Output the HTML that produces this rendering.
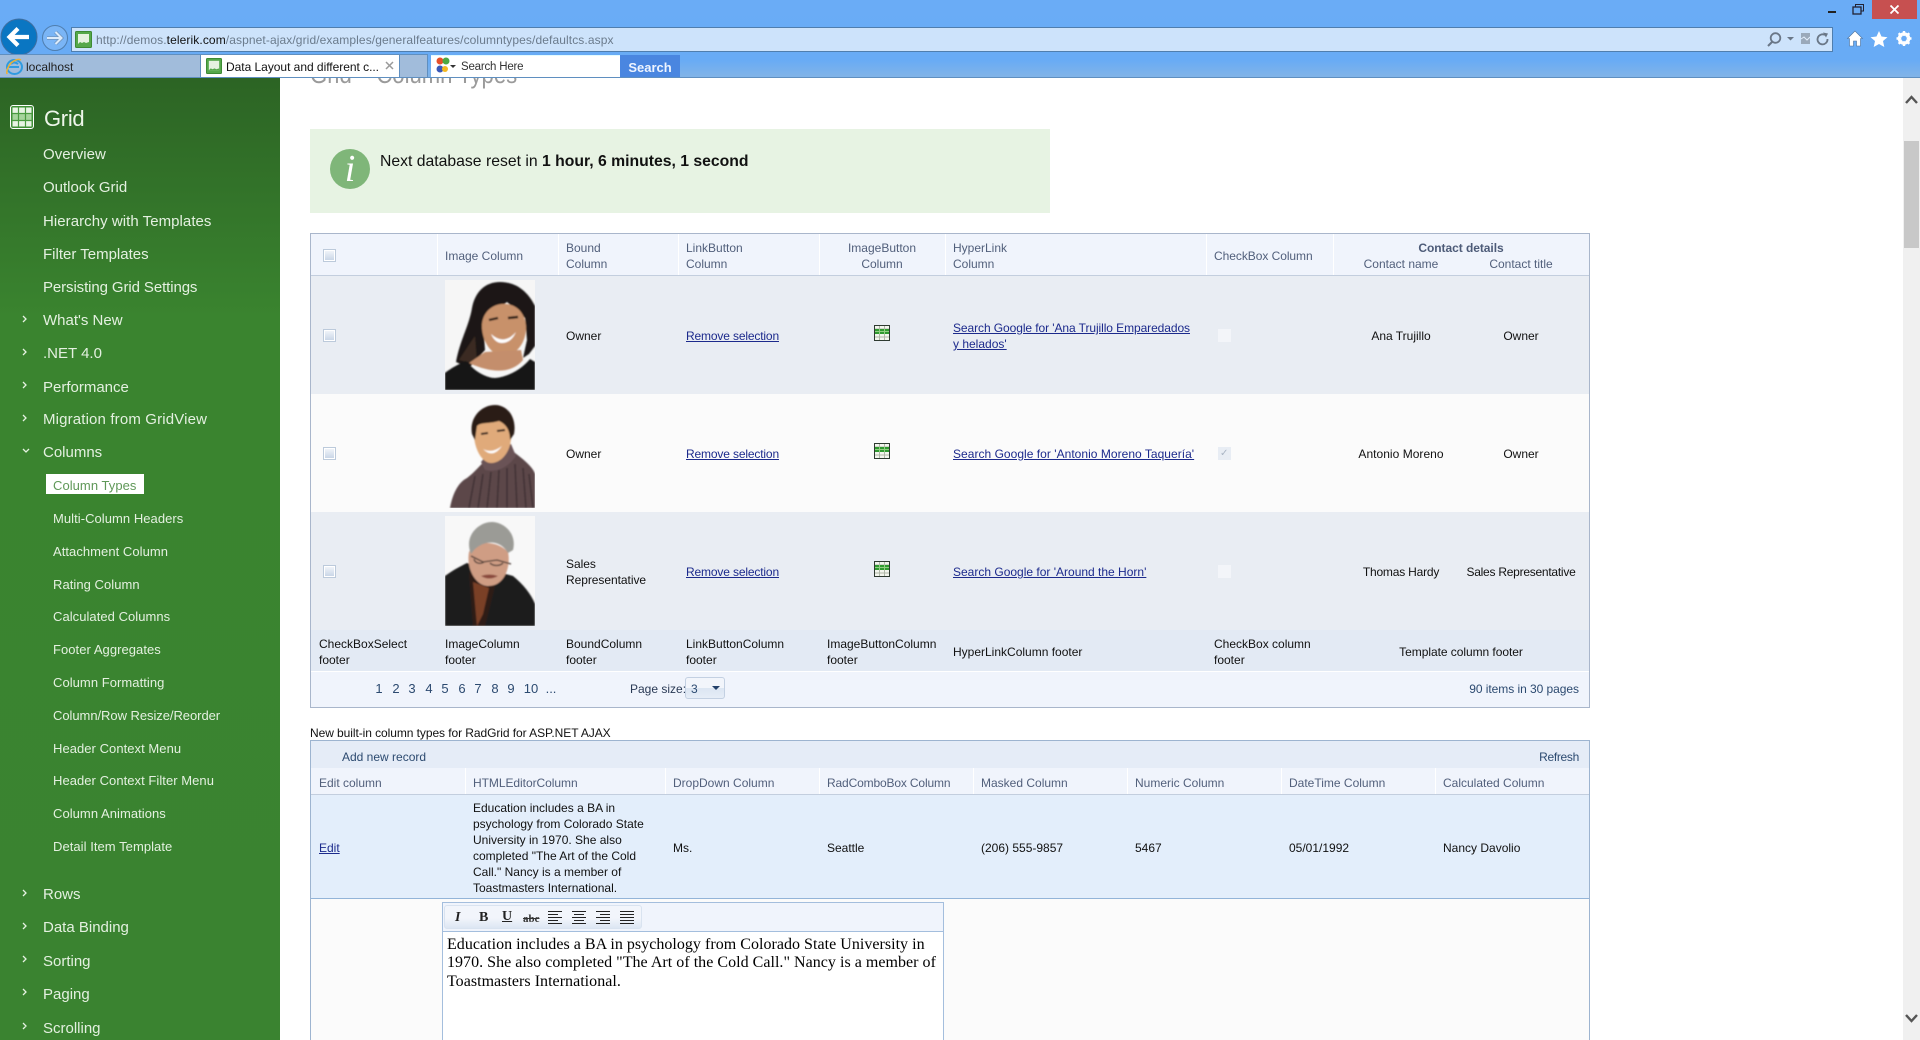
<!DOCTYPE html>
<html><head><meta charset="utf-8"><title>Data Layout and different column types</title>
<style>
html,body{margin:0;padding:0;width:1920px;height:1040px;overflow:hidden;background:#fff;font-family:"Liberation Sans",sans-serif;font-size:12px;color:#111}
div,span,a,svg{position:absolute;white-space:nowrap}
b span,a span{position:static}
.t{line-height:16px}
.h{color:#515f7b}
.n{font-size:15px;line-height:20px;color:#e4f0e0;left:43px;letter-spacing:0}
.s{font-size:13px;line-height:18px;color:#e4f0e0;left:53px;letter-spacing:.05px}
a{color:#1c2a8c;text-decoration:underline;line-height:16px}
.r{letter-spacing:-.15px}
.v{width:1px;background:#fff}
.cb{width:13px;height:13px;box-sizing:border-box;border:1px solid #bccadb;background:linear-gradient(#f4f7fb,#c6d3e5);box-shadow:inset 0 0 0 1px #fff}
.cd{width:13px;height:13px;background:#f3f5f9;border:0}
.p{color:#2c4a70;line-height:16px;font-size:13px;top:681px;transform:translateX(-50%)}
.c{transform:translateX(-50%)}
</style></head><body>

<!-- page content -->
<div style="left:0;top:78px;width:280px;height:962px;background:linear-gradient(#2c6424 0,#3a842f 240px,#3a8330 100%)"></div>

<div class="t" style="left:310px;top:58px;font-size:26px;line-height:32px;color:#9a9a9a;transform:scaleX(.85);transform-origin:left">Grid – Column Types</div>

<div style="left:310px;top:129px;width:740px;height:84px;background:#e7f3e3"></div>
<div style="left:330px;top:149px;width:40px;height:40px;border-radius:50%;background:#7fb679"></div>
<div style="left:330px;top:149px;width:40px;height:40px;text-align:center;font:italic 38px/40px 'Liberation Serif',serif;color:#fff">i</div>
<div style="left:380px;top:152px;font-size:15.75px;line-height:20px;color:#111">Next database reset in <b>1 hour, 6 minutes, 1 second</b></div>

<!-- table 1 -->
<div style="left:310px;top:233px;width:1280px;height:475px;box-sizing:border-box;border:1px solid #a9b6cb;background:#fff"></div>
<div style="left:311px;top:234px;width:1278px;height:42px;background:#f0f4fc;border-bottom:1px solid #c3cede;box-sizing:border-box"></div>
<div style="left:311px;top:276px;width:1278px;height:118px;background:#e9edf3"></div>
<div style="left:311px;top:394px;width:1278px;height:118px;background:#fbfbfb"></div>
<div style="left:311px;top:512px;width:1278px;height:118px;background:#e9edf3"></div>
<div style="left:311px;top:630px;width:1278px;height:41px;background:#e3eaf4"></div>
<div style="left:311px;top:671px;width:1278px;height:36px;background:#f0f4fc;border-top:1px solid #fff;box-sizing:border-box"></div>
<div class="v" style="left:437px;top:234px;height:41px"></div><div class="v" style="left:558px;top:234px;height:41px"></div><div class="v" style="left:678px;top:234px;height:41px"></div><div class="v" style="left:819px;top:234px;height:41px"></div><div class="v" style="left:945px;top:234px;height:41px"></div><div class="v" style="left:1206px;top:234px;height:41px"></div><div class="v" style="left:1333px;top:234px;height:41px"></div>

<div class="cb" style="left:323px;top:249px"></div>
<div class="t h" style="left:445px;top:248px">Image Column</div>
<div class="t h" style="left:566px;top:240px">Bound<br>Column</div>
<div class="t h" style="left:686px;top:240px">LinkButton<br>Column</div>
<div class="t h c" style="left:882px;top:240px;text-align:center">ImageButton<br>Column</div>
<div class="t h" style="left:953px;top:240px">HyperLink<br>Column</div>
<div class="t h" style="left:1214px;top:248px;letter-spacing:-.05px">CheckBox Column</div>
<div class="t c" style="left:1461px;top:240px;color:#4d5b78;font-weight:bold;letter-spacing:-.05px">Contact details</div>
<div class="t h c" style="left:1401px;top:256px">Contact name</div>
<div class="t h c" style="left:1521px;top:256px">Contact title</div>

<!-- photos -->
<svg style="left:445px;top:280px" width="90" height="110" viewBox="0 0 90 110">
<defs><filter id="f" x="-10%" y="-10%" width="120%" height="120%"><feGaussianBlur stdDeviation=".7"/></filter></defs>
<rect width="90" height="110" fill="#f6f6f6"/>
<g filter="url(#f)">
<path d="M55 2C40 2 30 12 27 28C24 46 15 60 11 82L24 88L40 70L38 40L62 22L80 38L82 60L78 78L84 74L90 66V26C82 10 70 2 55 2Z" fill="#1a1512"/>
<path d="M14 80L30 56L32 84Z" fill="#3a2c20"/>
<path d="M37 44C38 32 48 23 61 24C74 25 81 36 81 48C81 62 72 75 59 76C46 76 36 60 37 44Z" fill="#c8916a"/>
<path d="M40 72L76 70L78 80C68 92 50 95 24 83Z" fill="#c48e6c"/>
<path d="M46 54Q59 66 71 52Q66 63 57 63Q50 63 46 54Z" fill="#fff"/>
<path d="M44 40L53 38M63 38L73 37" stroke="#2a1a12" stroke-width="2.400"/>
<path d="M0 93C6 88 14 84 21 81C30 92 42 98 50 98C62 97 76 90 85 79L90 82V110H0Z" fill="#121212"/>
</g></svg>
<svg style="left:445px;top:398px" width="90" height="110" viewBox="0 0 90 110">
<rect width="90" height="110" fill="#fbfbfb"/>
<g filter="url(#f)">
<path d="M5 110C8 94 14 84 22 80C30 74 36 66 40 63L66 52C74 58 88 68 90 76V110Z" fill="#5b4649"/>
<path d="M36 64L44 54L66 46L71 58Q58 76 40 72Z" fill="#6a5357"/>
<g stroke="#3e2e31" stroke-width="1.400"><path d="M30 78L24 110M38 76L33 110M46 74L42 110M54 72L52 110M62 70L62 110M70 66L72 110M78 70L81 110M84 76L88 110"/></g>
<path d="M29 36C29 26 36 19 47 19C59 19 66 27 66 36C67 50 59 64 47 65C37 66 29 50 29 36Z" fill="#e0aa7a"/>
<path d="M27 36C24 20 36 7 50 7C63 7 72 20 69 36L65 42C65 32 61 26 54 23C44 26 36 24 32 28L30 42Z" fill="#2b1f17"/>
<path d="M38 51Q47 56 57 48Q48 61 38 51Z" fill="#fff"/>
<path d="M36 36L43 35M52 33L60 32" stroke="#33211a" stroke-width="2"/>
</g></svg>
<svg style="left:445px;top:516px" width="90" height="110" viewBox="0 0 90 110">
<rect width="90" height="110" fill="#f8f8f8"/>
<g filter="url(#f)">
<path d="M0 60C8 54 16 50 22 47L68 60C78 68 86 78 90 88V110H0Z" fill="#1c1c1e"/>
<path d="M24 56L50 70L40 110H28Z" fill="#2d1a18"/>
<path d="M28 66L44 72L38 98L32 110Z" fill="#7a4028"/>
<path d="M24 36C30 24 52 24 63 36C66 50 60 71 42 70C30 69 21 52 24 36Z" fill="#cf9d84"/>
<path d="M26 38C18 18 36 5 48 6C60 7 72 18 68 34L63 37C56 24 40 23 29 34Z" fill="#9b9b96"/>
<path d="M26 40L38 46L52 44L66 48" stroke="#4a3a34" stroke-width="1.300" fill="none"/>
<path d="M29 43a6 5 0 0 0 10 3M45 47a8 6 0 0 0 13 0" stroke="#4a3a34" stroke-width="1.300" fill="none"/>
<path d="M36 60Q44 57 53 60Q44 65 36 60Z" fill="#8a4a3c"/>
</g></svg>

<div class="cb" style="left:323px;top:329px"></div><div class="cb" style="left:323px;top:447px"></div><div class="cb" style="left:323px;top:565px"></div>

<div class="t" style="left:566px;top:328px">Owner</div>
<div class="t" style="left:566px;top:446px">Owner</div>
<div class="t" style="left:566px;top:556px;letter-spacing:-.05px">Sales<br>Representative</div>
<a class="r" style="left:686px;top:328px">Remove selection</a>
<a class="r" style="left:686px;top:446px">Remove selection</a>
<a class="r" style="left:686px;top:564px">Remove selection</a>

<svg style="left:874px;top:325px" width="16" height="16" viewBox="0 0 16 16"><rect x=".5" y=".5" width="15" height="15" fill="#f3f6ee" stroke="#2e3a30"/><path d="M1 4H15M1 8H15M1 12H15M5.500 1V15M10.500 1V15" stroke="#b0b8a8" fill="none"/><rect x="1" y="4" width="14" height="5" fill="#2f9a2f"/><path d="M5.500 4V9M10.500 4V9M1 6.500H15" stroke="#8fcf80" fill="none"/></svg>
<svg style="left:874px;top:443px" width="16" height="16" viewBox="0 0 16 16"><rect x=".5" y=".5" width="15" height="15" fill="#f3f6ee" stroke="#2e3a30"/><path d="M1 4H15M1 8H15M1 12H15M5.500 1V15M10.500 1V15" stroke="#b0b8a8" fill="none"/><rect x="1" y="4" width="14" height="5" fill="#2f9a2f"/><path d="M5.500 4V9M10.500 4V9M1 6.500H15" stroke="#8fcf80" fill="none"/></svg>
<svg style="left:874px;top:561px" width="16" height="16" viewBox="0 0 16 16"><rect x=".5" y=".5" width="15" height="15" fill="#f3f6ee" stroke="#2e3a30"/><path d="M1 4H15M1 8H15M1 12H15M5.500 1V15M10.500 1V15" stroke="#b0b8a8" fill="none"/><rect x="1" y="4" width="14" height="5" fill="#2f9a2f"/><path d="M5.500 4V9M10.500 4V9M1 6.500H15" stroke="#8fcf80" fill="none"/></svg>

<a style="left:953px;top:320px;letter-spacing:-.08px">Search Google for 'Ana Trujillo Emparedados</a>
<a style="left:953px;top:336px">y helados'</a>
<a style="left:953px;top:446px;letter-spacing:.03px">Search Google for 'Antonio Moreno Taquería'</a>
<a style="left:953px;top:564px">Search Google for 'Around the Horn'</a>

<div class="cd" style="left:1218px;top:329px"></div>
<div class="cd" style="left:1218px;top:447px;background:#e8edf4"></div>
<div class="t" style="left:1220px;top:446px;font-size:10px;color:#aab5c4">✓</div>
<div class="cd" style="left:1218px;top:565px"></div>

<div class="t c" style="left:1401px;top:328px">Ana Trujillo</div><div class="t c" style="left:1521px;top:328px">Owner</div>
<div class="t c" style="left:1401px;top:446px;letter-spacing:.03px">Antonio Moreno</div><div class="t c" style="left:1521px;top:446px">Owner</div>
<div class="t c" style="left:1401px;top:564px;letter-spacing:-.2px">Thomas Hardy</div><div class="t c" style="left:1521px;top:564px;letter-spacing:-.25px">Sales Representative</div>

<div class="t" style="left:319px;top:636px">CheckBoxSelect<br>footer</div>
<div class="t" style="left:445px;top:636px">ImageColumn<br>footer</div>
<div class="t" style="left:566px;top:636px">BoundColumn<br>footer</div>
<div class="t" style="left:686px;top:636px">LinkButtonColumn<br>footer</div>
<div class="t" style="left:827px;top:636px">ImageButtonColumn<br>footer</div>
<div class="t" style="left:953px;top:644px">HyperLinkColumn footer</div>
<div class="t" style="left:1214px;top:636px">CheckBox column<br>footer</div>
<div class="t c" style="left:1461px;top:644px;letter-spacing:-.05px">Template column footer</div>

<span class="p" style="left:379px">1</span><span class="p" style="left:396px">2</span><span class="p" style="left:412px">3</span><span class="p" style="left:429px">4</span><span class="p" style="left:445px">5</span><span class="p" style="left:462px">6</span><span class="p" style="left:478px">7</span><span class="p" style="left:495px">8</span><span class="p" style="left:511px">9</span><span class="p" style="left:531px">10</span><span class="p" style="left:551px">...</span>
<div class="t" style="left:630px;top:681px;color:#2a3a55">Page size:</div>
<div style="left:685px;top:677px;width:40px;height:22px;box-sizing:border-box;border:1px solid #c3d0e2;border-radius:3px;background:linear-gradient(#f2f5fb 50%,#dbe5f2 50%,#e6edf7)"></div>
<div class="t" style="left:691px;top:681px;color:#2c4a70">3</div>
<svg style="left:712px;top:686px" width="9" height="5"><path d="M0 0H8L4 4Z" fill="#22406a"/></svg>
<div class="t" style="right:341px;top:681px;color:#2c4a70;letter-spacing:-.05px">90 items in 30 pages</div>

<div class="t" style="left:310px;top:725px;color:#111;letter-spacing:-.07px">New built-in column types for RadGrid for ASP.NET AJAX</div>

<!-- table 2 -->
<div style="left:310px;top:740px;width:1280px;height:300px;box-sizing:border-box;border:1px solid #9db4d0;border-bottom:0;background:#fbfbfb"></div>
<div style="left:311px;top:741px;width:1278px;height:27px;background:#e5ecf7"></div>
<div style="left:311px;top:768px;width:1278px;height:27px;background:#f0f4fc;border-bottom:1px solid #c3cede;box-sizing:border-box"></div>
<div style="left:311px;top:795px;width:1278px;height:104px;background:#e3eefb;border-bottom:1px solid #93b4d8;box-sizing:border-box"></div>
<div class="v" style="left:465px;top:768px;height:26px"></div><div class="v" style="left:665px;top:768px;height:26px"></div><div class="v" style="left:819px;top:768px;height:26px"></div><div class="v" style="left:973px;top:768px;height:26px"></div><div class="v" style="left:1127px;top:768px;height:26px"></div><div class="v" style="left:1281px;top:768px;height:26px"></div><div class="v" style="left:1435px;top:768px;height:26px"></div>
<div class="t" style="left:342px;top:749px;color:#2c4a70">Add new record</div>
<div class="t" style="right:341px;top:749px;color:#2c4a70;letter-spacing:-.3px">Refresh</div>
<div class="t h" style="left:319px;top:775px">Edit column</div>
<div class="t h" style="left:473px;top:775px;letter-spacing:-.05px">HTMLEditorColumn</div>
<div class="t h" style="left:673px;top:775px">DropDown Column</div>
<div class="t h" style="left:827px;top:775px;letter-spacing:-.15px">RadComboBox Column</div>
<div class="t h" style="left:981px;top:775px">Masked Column</div>
<div class="t h" style="left:1135px;top:775px">Numeric Column</div>
<div class="t h" style="left:1289px;top:775px">DateTime Column</div>
<div class="t h" style="left:1443px;top:775px">Calculated Column</div>
<a style="left:319px;top:840px">Edit</a>
<div class="t" style="left:473px;top:800px">Education includes a BA in<br>psychology from Colorado State<br>University in 1970. She also<br>completed "The Art of the Cold<br>Call." Nancy is a member of<br>Toastmasters International.</div>
<div class="t" style="left:673px;top:840px">Ms.</div>
<div class="t" style="left:827px;top:840px">Seattle</div>
<div class="t" style="left:981px;top:840px">(206) 555-9857</div>
<div class="t" style="left:1135px;top:840px">5467</div>
<div class="t" style="left:1289px;top:840px">05/01/1992</div>
<div class="t" style="left:1443px;top:840px">Nancy Davolio</div>

<!-- editor -->
<div style="left:442px;top:902px;width:502px;height:138px;box-sizing:border-box;border:1px solid #a4bedd;border-bottom:0;background:#fff"></div>
<div style="left:443px;top:903px;width:500px;height:29px;background:#f0f4fc;border-bottom:1px solid #a4bedd;box-sizing:border-box"></div>
<div style="left:444px;top:905px;width:198px;height:24px;box-sizing:border-box;border:1px solid #d9e3f0;border-radius:3px;background:linear-gradient(#f2f5fb 55%,#dce6f3)"></div>
<div style="left:455px;top:909px;font:italic bold 14px/18px 'Liberation Serif',serif;color:#222">I</div>
<div style="left:479px;top:909px;font:bold 14px/18px 'Liberation Serif',serif;color:#222">B</div>
<div style="left:502px;top:908px;font:bold 14px/18px 'Liberation Serif',serif;color:#222;text-decoration:underline">U</div>
<div style="left:523px;top:911px;font:bold 11px/16px 'Liberation Serif',serif;color:#333;text-decoration:line-through">abc</div>
<svg style="left:548px;top:911px" width="90" height="14"><g stroke="#222" stroke-width="1" fill="none"><path d="M0 .5H14M0 3.500H10M0 6.500H14M0 9.500H10M0 12.500H14"/><path d="M24 .5H38M26 3.500H36M24 6.500H38M26 9.500H36M24 12.500H38"/><path d="M48 .5H62M52 3.500H62M48 6.500H62M52 9.500H62M48 12.500H62"/><path d="M72 .5H86M72 3.500H86M72 6.500H86M72 9.500H86M72 12.500H86"/></g></svg>
<div style="left:447px;top:936px;font:16px/18.4px 'Liberation Serif',serif;color:#000;letter-spacing:.03px">Education includes a BA in psychology from Colorado State University in<br>1970. She also completed "The Art of the Cold Call." Nancy is a member of<br>Toastmasters International.</div>

<!-- scrollbar -->
<div style="left:1903px;top:78px;width:17px;height:962px;background:#f0f0f0"></div>
<div style="left:1904px;top:141px;width:15px;height:107px;background:#c8c8c8"></div>
<svg style="left:1905px;top:95px" width="13" height="10"><path d="M1 8L6.500 2L12 8" stroke="#555" stroke-width="2.400" fill="none"/></svg>
<svg style="left:1905px;top:1013px" width="13" height="10"><path d="M1 2L6.500 8L12 2" stroke="#555" stroke-width="2.400" fill="none"/></svg>

<!-- sidebar text -->
<svg style="left:10px;top:105px" width="24" height="24" viewBox="0 0 24 24"><rect x=".5" y=".5" width="23" height="23" rx="2.500" fill="#3f8f36" stroke="#fff"/><rect x="2.500" y="2.500" width="19" height="19" fill="#e8f4e4"/><rect x="2.500" y="8.500" width="19" height="7" fill="#a6d49c"/><path d="M2 8.500H22M2 15.500H22M8.500 2V22M15.500 2V22" stroke="#4a9a40" stroke-width="1.200"/></svg>
<div style="left:44px;top:105px;font-size:22px;line-height:28px;color:#eef6ea;letter-spacing:-.3px">Grid</div>

<div class="n" style="top:145px;letter-spacing:.05px">Overview</div>
<div class="n" style="top:178px">Outlook Grid</div>
<div class="n" style="top:212px;letter-spacing:.05px">Hierarchy with Templates</div>
<div class="n" style="top:245px">Filter Templates</div>
<div class="n" style="top:278px;letter-spacing:-.1px">Persisting Grid Settings</div>
<div class="n" style="top:311px">What's New</div>
<div class="n" style="top:344px">.NET 4.0</div>
<div class="n" style="top:378px">Performance</div>
<div class="n" style="top:410px;letter-spacing:.15px">Migration from GridView</div>
<div class="n" style="top:443px">Columns</div>

<div style="left:46px;top:474px;width:98px;height:20px;background:#fff"></div>
<div class="s" style="top:477px;color:#5f9858">Column Types</div>
<div class="s" style="top:510px">Multi-Column Headers</div>
<div class="s" style="top:543px">Attachment Column</div>
<div class="s" style="top:576px">Rating Column</div>
<div class="s" style="top:608px">Calculated Columns</div>
<div class="s" style="top:641px">Footer Aggregates</div>
<div class="s" style="top:674px">Column Formatting</div>
<div class="s" style="top:707px;letter-spacing:-.05px">Column/Row Resize/Reorder</div>
<div class="s" style="top:740px">Header Context Menu</div>
<div class="s" style="top:772px">Header Context Filter Menu</div>
<div class="s" style="top:805px">Column Animations</div>
<div class="s" style="top:838px">Detail Item Template</div>

<div class="n" style="top:885px">Rows</div>
<div class="n" style="top:918px">Data Binding</div>
<div class="n" style="top:952px">Sorting</div>
<div class="n" style="top:985px">Paging</div>
<div class="n" style="top:1019px">Scrolling</div>

<svg style="left:0;top:0" width="40" height="1040"><g stroke="#e6f2e2" stroke-width="1.300" fill="none"><path d="M23 316l3 3l-3 3M23 349l3 3l-3 3M23 382l3 3l-3 3M23 415l3 3l-3 3M23 890l3 3l-3 3M23 923l3 3l-3 3M23 956l3 3l-3 3M23 989l3 3l-3 3M23 1023l3 3l-3 3"/><path d="M23 449l3 3l3 -3"/></g></svg>

<!-- browser chrome -->
<div style="left:0;top:0;width:1920px;height:78px;background:linear-gradient(#6aacf6 0,#68abf5 60px,#80b3e8 76px);border-bottom:1px solid #5f8fc0;box-sizing:border-box"></div>
<div style="left:71px;top:27px;width:1762px;height:25px;box-sizing:border-box;border:1px solid #4f7eae;background:#cde3fb"></div>
<svg style="left:75px;top:31px" width="17" height="17" viewBox="0 0 17 17"><rect x=".5" y=".5" width="16" height="16" rx="1" fill="#55a84a" stroke="#3d8a34"/><rect x="3" y="3" width="11" height="10" fill="#e6f2e0"/><path d="M3 13l2 -2 2 1 2 -1 2 1 3 -1V13Z" fill="#55a84a"/></svg>
<div style="left:96px;top:32px;line-height:16px;font-size:12px;color:#6b7b8c;letter-spacing:.1px">http://demos.<span style="position:static;color:#111">telerik.com</span>/aspnet-ajax/grid/examples/generalfeatures/columntypes/defaultcs.aspx</div>

<svg style="left:0;top:18px" width="72" height="38" viewBox="0 0 72 38">
<circle cx="19" cy="19" r="18" fill="#0a76c2" stroke="#3f6ea0"/>
<path d="M10 19H29M18 10.500L9.500 19L18 27.500" stroke="#fff" stroke-width="4.200" fill="none"/>
<circle cx="55" cy="20" r="12.500" fill="#7ab5f6" stroke="#4f7eae"/>
<path d="M47 20H61M55.500 14L61.500 20L55.500 26" stroke="#6f95bf" stroke-width="3.600" fill="none"/>
<path d="M47 20H61M55.500 14L61.500 20L55.500 26" stroke="#dcebfb" stroke-width="2" fill="none"/>
</svg>

<div style="left:0;top:55px;width:200px;height:22px;background:#a1bcdb"></div>
<div style="left:200px;top:54px;width:200px;height:23px;background:#fff;border:1px solid #5f8fc0;border-bottom:0;box-sizing:border-box"></div>
<div style="left:400px;top:55px;width:28px;height:22px;background:#a1bcdb;border-right:1px solid #5f8fc0;box-sizing:border-box"></div>
<div style="left:0;top:54px;width:428px;height:1px;background:#5f8fc0"></div>
<svg style="left:6px;top:58px" width="17" height="17" viewBox="0 0 17 17"><ellipse cx="8.500" cy="9" rx="7.500" ry="7" fill="none" stroke="#2f9be0" stroke-width="2"/><path d="M3 9H13M5 6Q8 3 12 6" stroke="#2f9be0" stroke-width="2" fill="none"/><path d="M1 16Q0 11 5 5Q11 0 15 2" stroke="#f0b030" stroke-width="1.500" fill="none"/></svg>
<div class="t" style="left:26px;top:59px;font-size:12px;color:#222">localhost</div>
<svg style="left:206px;top:58px" width="16" height="16" viewBox="0 0 17 17"><rect x=".5" y=".5" width="16" height="16" rx="1" fill="#55a84a" stroke="#3d8a34"/><rect x="3" y="3" width="11" height="10" fill="#e6f2e0"/><path d="M3 13l2 -2 2 1 2 -1 2 1 3 -1V13Z" fill="#55a84a"/></svg>
<div class="t" style="left:226px;top:59px;font-size:12px;color:#111;letter-spacing:-.03px">Data Layout and different c...</div>
<svg style="left:385px;top:61px" width="9" height="9"><path d="M1 1L8 8M8 1L1 8" stroke="#9a9a9a" stroke-width="1.500"/></svg>

<div style="left:431px;top:55px;width:189px;height:22px;background:#fff;border-top:1px solid #e3fbff;box-sizing:border-box"></div>
<svg style="left:435px;top:56px" width="22" height="20" viewBox="0 0 22 20"><circle cx="5" cy="5" r="3.500" fill="#e8502a"/><circle cx="11" cy="5" r="3.500" fill="#4ca842"/><circle cx="5" cy="13" r="3.500" fill="#3a58b8"/><circle cx="10" cy="13" r="3" fill="#f4b820"/><path d="M15 9H21L18 12Z" fill="#333"/></svg>
<div class="t" style="left:461px;top:59px;font-size:11.500px;color:#333;letter-spacing:-.2px">Search Here</div>
<div style="left:620px;top:55px;width:60px;height:22px;background:#4a86e0"></div>
<div style="left:620px;top:59px;width:60px;text-align:center;line-height:17px;font-size:13px;font-weight:bold;color:#eef4ff">Search</div>

<div style="left:1828px;top:11px;width:8px;height:2px;background:#222"></div>
<svg style="left:1852px;top:4px" width="13" height="11"><path d="M3.500 2.500V.5H11.500V7H8.500" stroke="#223" fill="none"/><rect x="1" y="3" width="8" height="7" stroke="#223" stroke-width="1.300" fill="none"/></svg>
<div style="left:1872px;top:0;width:45px;height:19px;background:#c75050"></div>
<svg style="left:1890px;top:5px" width="9" height="9"><path d="M.5 .5L8.500 8.500M8.500 .5L.5 8.500" stroke="#fff" stroke-width="1.800"/></svg>

<svg style="left:1766px;top:31px" width="66" height="17" viewBox="0 0 66 17"><circle cx="9.500" cy="7" r="4.800" fill="none" stroke="#6a7787" stroke-width="1.800"/><path d="M6 11L2 15" stroke="#6a7787" stroke-width="2"/><path d="M21 6H28L24.500 9.500Z" fill="#6a7787"/><rect x="35" y="2" width="9" height="11" fill="#9aa9ba"/><path d="M35 8l3 -2 3 3 3 -3" stroke="#e3eefb" fill="none"/><path d="M59 4a5 5 0 1 0 2.500 4" stroke="#6a7787" stroke-width="1.800" fill="none"/><path d="M57 1.500L62 2.500L60 6.500Z" fill="#6a7787"/></svg>
<svg style="left:1846px;top:30px" width="66" height="18" viewBox="0 0 66 18">
<path d="M9 1L1.500 8.500H3.500V16H7.500V11H10.500V16H14.500V8.500H16.500Z" fill="#fff" stroke="#4a6f9a" stroke-width=".6"/>
<path d="M33 1L35.500 6.500L41.500 7.200L37 11L38.300 17L33 14L27.700 17L29 11L24.500 7.200L30.500 6.500Z" fill="#fff"/>
<circle cx="58" cy="8.500" r="5" fill="none" stroke="#fff" stroke-width="2.600"/>
<g stroke="#fff" stroke-width="2.400"><path d="M58 1V16M50.500 8.500H65.500M52.700 3.200L63.300 13.800M63.300 3.200L52.700 13.800"/></g>
<circle cx="58" cy="8.500" r="2.800" fill="#6aacf6"/>
</svg>

</body></html>
